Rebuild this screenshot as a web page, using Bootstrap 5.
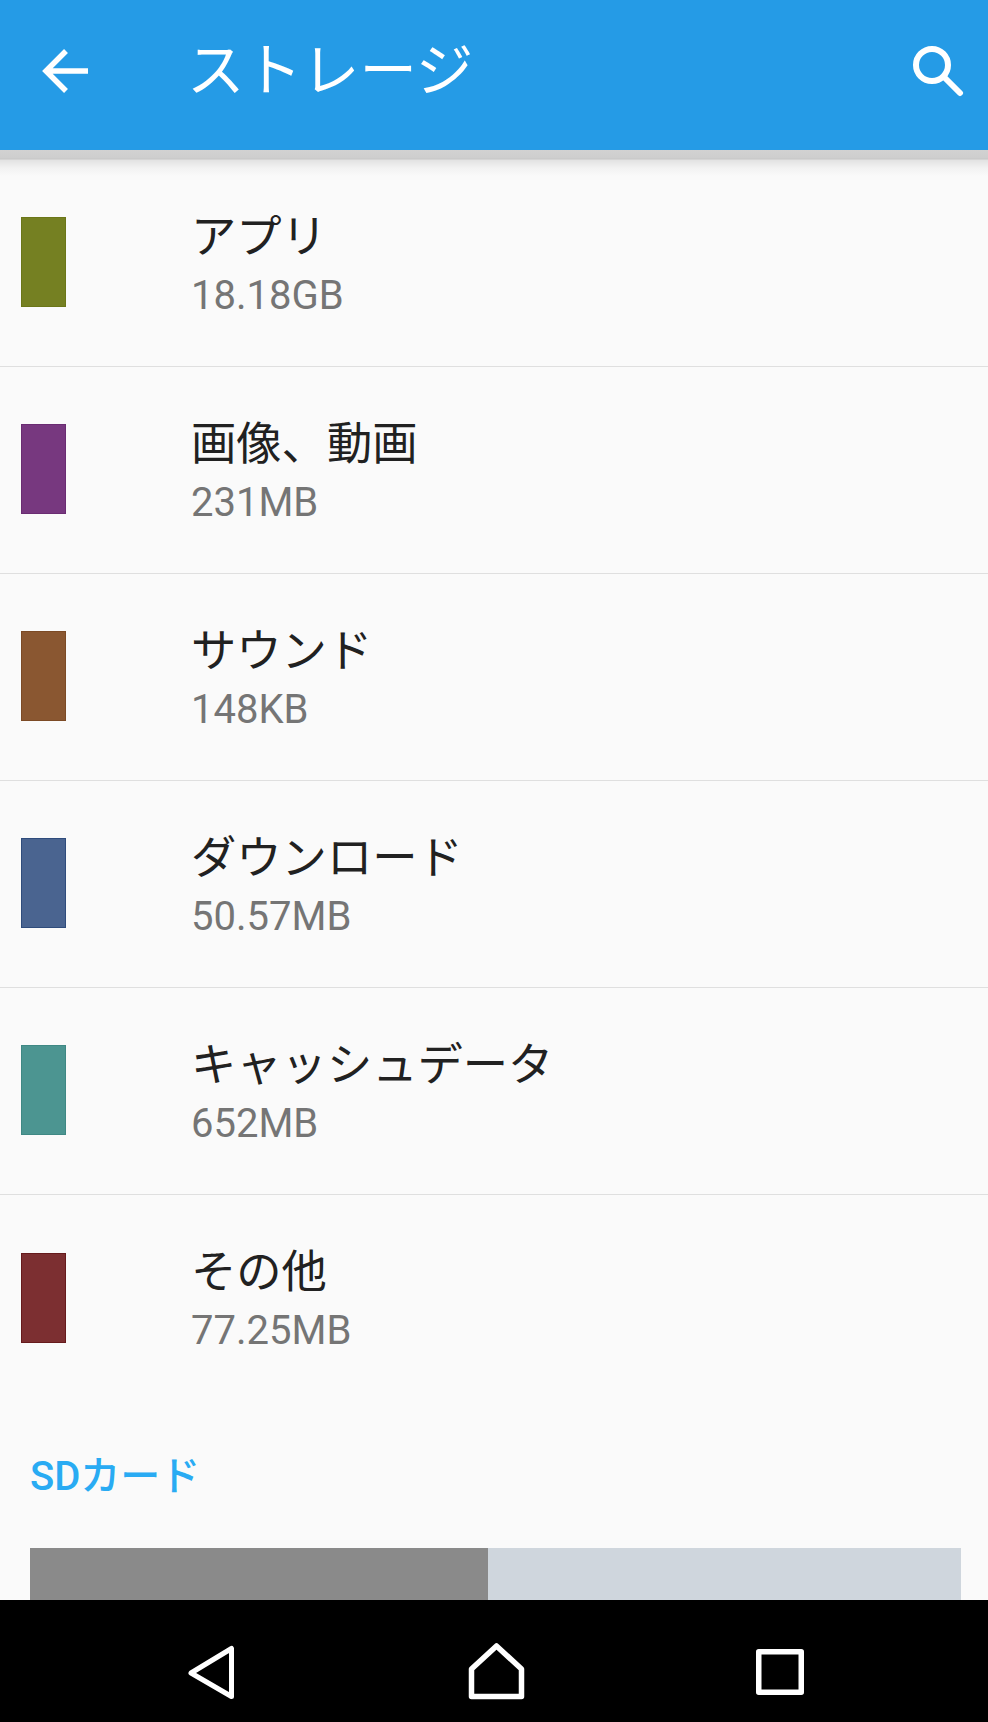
<!DOCTYPE html>
<html lang="ja">
<head>
    <meta charset="UTF-8">
    <meta name="viewport" content="width=device-width, initial-scale=1.0">
    <title>ストレージ</title>
    <link href="https://cdn.jsdelivr.net/npm/bootstrap@5.3.6/dist/css/bootstrap.min.css" rel="stylesheet">
    <style>
        html, body { height: 100%; }
        body {
            background: #fafafa;
            font-family: Roboto, "Noto Sans CJK JP", sans-serif;
        }
        .pantalla { height: 1722px; overflow: hidden; }
        .barra-app {
            height: 150px;
            background: #259be6;
            color: #fff;
            flex: none;
        }
        .barra-app svg { flex: none; }
        .flecha { margin: -8px 0 0 39px; }
        .titulo-app {
            font-size: 57.5px;
            line-height: 1;
            font-weight: 400;
            margin: -6px 0 0 98px;
        }
        .lupa { margin: -8px 24px 0 auto; }
        .sombra {
            height: 26px;
            margin-bottom: -16px;
            flex: none;
            position: relative;
            background: linear-gradient(#d2d2d2 0, #cecece 8px, #c6c6c6 9px, #e2e2e2 10px, #f2f2f2 18px, #fafafa 26px);
        }
        .contenido { flex: 1 1 auto; overflow: hidden; min-height: 0; }
        .lista-storage { --bs-list-group-bg: transparent; --bs-list-group-border-color: #dfdfdf; border-radius: 0; }
        .fila {
            height: 207px;
            padding: 0 0 0 21px;
            gap: 125px;
        }
        .muestra { width: 45px; height: 90px; flex: none; border: 1px solid; margin-top: -2px; }
        .fila-nombre { font-size: 45.3px; line-height: 64px; color: #212121; }
        .fila-valor { font-size: 40px; line-height: 51px; color: #757575; }
        .seccion {
            color: #29abf3;
            font-size: 40px;
            font-weight: 500;
            line-height: 50px;
            padding: 50px 30px 46px;
        }
        .barra-uso { height: 60px; margin: 0 27px 0 30px; border-radius: 0; background: #cfd6dd; }
        .barra-uso .progress-bar { background: #8a8a8a; }
        .nav-sistema { height: 122px; background: #000; flex: none; padding: 41px 0 21px 181px; gap: 225px; }
    </style>
</head>
<body>

<div class="pantalla d-flex flex-column">
    <div class="barra-app d-flex align-items-center">
        <svg class="flecha" width="50" height="50" viewBox="0 0 50 50" fill="none" stroke="#fff" stroke-width="5.5">
            <path d="M49 25H8M27 5 7 25l20 20"/>
        </svg>
        <h1 class="titulo-app">ストレージ</h1>
        <svg class="lupa" width="52" height="52" viewBox="0 0 52 52" fill="none" stroke="#fff" stroke-width="6">
            <circle cx="20" cy="20" r="16"/>
            <path d="M32 32 48 48" stroke-linecap="round"/>
        </svg>
    </div>
    <div class="sombra"></div>

    <div class="contenido">
        <div class="list-group list-group-flush lista-storage" id="listaStorage"></div>
        <div class="seccion">SDカード</div>
        <div class="progress barra-uso">
            <div class="progress-bar" style="width: 49.2%"></div>
        </div>
    </div>

    <div class="nav-sistema d-flex align-items-start">
        <svg width="60" height="60" viewBox="0 0 60 60" fill="none" stroke="#fff" stroke-width="5" stroke-linejoin="round">
            <path d="M50.5 7.5V55.5L10 32Z"/>
        </svg>
        <svg width="60" height="60" viewBox="0 0 60 60" fill="none" stroke="#fff" stroke-width="5.5" stroke-linejoin="round">
            <path d="M30.5 5 55.5 28V55.5H5.5V28Z"/>
        </svg>
        <svg width="60" height="60" viewBox="0 0 60 60" fill="none" stroke="#fff" stroke-width="5.5" stroke-linejoin="round">
            <rect x="7.75" y="10.75" width="42.5" height="40.5"/>
        </svg>
    </div>
</div>

<script>
    const categorias = [
        { nombre: "アプリ", valor: "18.18GB", color: "#758022", borde: "#6b7618" },
        { nombre: "画像、動画", valor: "231MB", color: "#77387f", borde: "#6a2c72" },
        { nombre: "サウンド", valor: "148KB", color: "#8a5731", borde: "#7c4a25" },
        { nombre: "ダウンロード", valor: "50.57MB", color: "#4a6490", borde: "#2f4c7c" },
        { nombre: "キャッシュデータ", valor: "652MB", color: "#4c9591", borde: "#3f8884" },
        { nombre: "その他", valor: "77.25MB", color: "#7c2f31", borde: "#661a1c" }
    ];

    const lista = document.getElementById("listaStorage");
    categorias.forEach(c => {
        const fila = document.createElement("div");
        fila.className = "list-group-item fila d-flex align-items-center";
        fila.innerHTML = `
            <div class="muestra" style="background-color: ${c.color}; border-color: ${c.borde}"></div>
            <div>
                <div class="fila-nombre">${c.nombre}</div>
                <div class="fila-valor">${c.valor}</div>
            </div>
        `;
        lista.appendChild(fila);
    });
</script>

<script src="https://cdn.jsdelivr.net/npm/bootstrap@5.3.6/dist/js/bootstrap.bundle.min.js"></script>
</body>
</html>
